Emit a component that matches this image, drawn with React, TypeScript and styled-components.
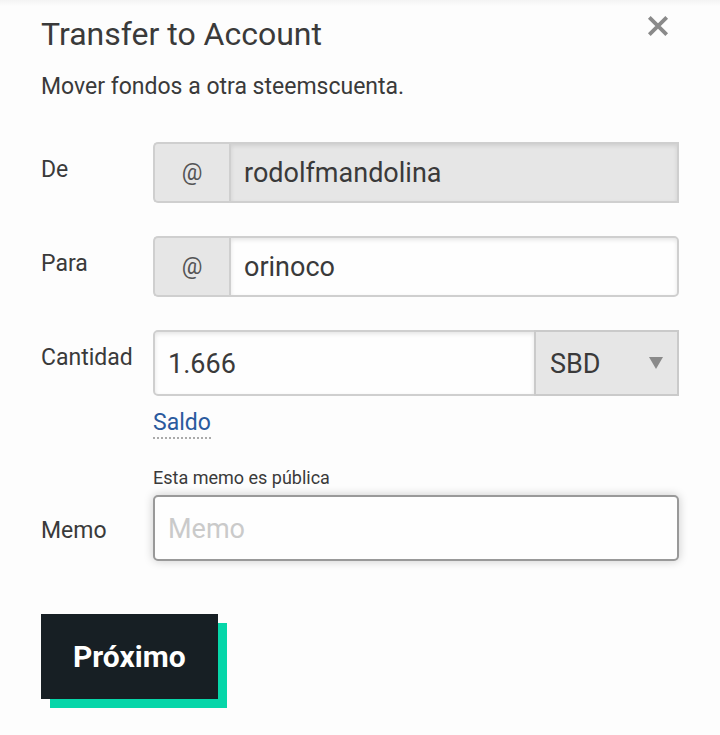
import { useState } from 'react';
import styled, { createGlobalStyle } from 'styled-components';

const App = () => {
  const [to, setTo] = useState('orinoco');
  const [amount, setAmount] = useState('1.666');
  const [memo, setMemo] = useState('');

  return (
    <>
      <GlobalStyle />
      <Dialog role="dialog" aria-labelledby="title">
        <Header>
          <Title id="title">Transfer to Account</Title>
          <CloseButton type="button" aria-label="Cerrar">
            <svg width="22" height="22" viewBox="0 0 22 22" aria-hidden="true">
              <path d="M2.3 2.3L19.7 19.7M19.7 2.3L2.3 19.7" stroke="#8a8a8a" strokeWidth="3.8" />
            </svg>
          </CloseButton>
        </Header>
        <Description>Mover fondos a otra steemscuenta.</Description>

        <Form onSubmit={(e) => e.preventDefault()}>
          <Row>
            <Label htmlFor="from">De</Label>
            <InputGroup>
              <Prefix>@</Prefix>
              <Input id="from" $attached="left" value="rodolfmandolina" disabled />
            </InputGroup>
          </Row>

          <Row>
            <Label htmlFor="to">Para</Label>
            <InputGroup>
              <Prefix>@</Prefix>
              <Input
                id="to"
                $attached="left"
                value={to}
                onChange={(e) => setTo(e.target.value)}
              />
            </InputGroup>
          </Row>

          <Row>
            <Label htmlFor="amount">Cantidad</Label>
            <div>
              <InputGroup $tall>
                <Input
                  id="amount"
                  $attached="right"
                  value={amount}
                  onChange={(e) => setAmount(e.target.value)}
                />
                <SelectWrapper>
                  <Select aria-label="Moneda" defaultValue="SBD">
                    <option>STEEM</option>
                    <option>SBD</option>
                  </Select>
                  <Arrow width="14" height="12" viewBox="0 0 14 12" aria-hidden="true">
                    <path d="M0 0H14L7 12Z" fill="#8a8a8a" />
                  </Arrow>
                </SelectWrapper>
              </InputGroup>
              <BalanceLink href="#balance">Saldo</BalanceLink>
            </div>
          </Row>

          <MemoRow>
            <Note>Esta memo es pública</Note>
            <Label htmlFor="memo">Memo</Label>
            <InputGroup $tall>
              <Input
                id="memo"
                $active
                placeholder="Memo"
                value={memo}
                onChange={(e) => setMemo(e.target.value)}
              />
            </InputGroup>
          </MemoRow>

          <SubmitButton type="submit">Próximo</SubmitButton>
        </Form>
      </Dialog>
    </>
  );
};

export default App;

const GlobalStyle = createGlobalStyle`
  *, *::before, *::after {
    box-sizing: border-box;
  }

  body {
    margin: 0;
    background: #fdfdfd;
    color: #3a3a3a;
    font-family: Roboto, sans-serif;
  }
`;

const Dialog = styled.main`
  padding: 14px 41px 28px;
  background: linear-gradient(#f4f4f4, #fdfdfd 6px);
`;

const Header = styled.header`
  display: flex;
  justify-content: space-between;
  align-items: flex-start;
`;

const Title = styled.h1`
  margin: 0;
  font-size: 32px;
  font-weight: 400;
  line-height: 40px;
`;

const CloseButton = styled.button`
  display: flex;
  margin-right: 10px;
  padding: 1px 0;
  border: 0;
  background: none;
  cursor: pointer;
`;

const Description = styled.p`
  margin: 17px 0 39px;
  font-size: 23px;
  line-height: 32px;
`;

const Form = styled.form`
  display: flex;
  flex-direction: column;
`;

const Row = styled.div`
  display: grid;
  grid-template-columns: 112px 1fr;
  margin-bottom: 34px;
`;

const MemoRow = styled(Row)`
  margin: -9px 0 53px;
`;

const Label = styled.label`
  padding-top: 12px;
  font-size: 23px;
  line-height: 32px;

  ${MemoRow} & {
    padding-top: 20px;
  }
`;

const InputGroup = styled.div<{ $tall?: boolean }>`
  display: flex;
  height: ${(props) => (props.$tall ? '66px' : '61px')};

  ${Row}:not(${MemoRow}) > & {
    margin-bottom: -1px;
  }
`;

const Prefix = styled.span`
  display: flex;
  flex: none;
  align-items: center;
  justify-content: center;
  width: 76px;
  border: 2px solid #cfcfcf;
  border-right: 0;
  border-radius: 5px 0 0 5px;
  background: #e6e6e6;
  color: #555;
  font-size: 23px;
`;

const radius = { left: '0 5px 5px 0', right: '5px 0 0 5px' };

const Input = styled.input<{ $attached?: 'left' | 'right'; $active?: boolean }>`
  flex: 1;
  min-width: 0;
  padding: 1px 13px 0;
  border: 2px solid ${(props) => (props.$active ? '#999' : '#cfcfcf')};
  border-radius: ${(props) => (props.$attached ? radius[props.$attached] : '5px')};
  background: #fefefe;
  box-shadow: ${(props) =>
    props.$active ? '0 0 10px #cacaca' : 'inset 0 2px 4px rgba(10, 10, 10, 0.1)'};
  color: #3a3a3a;
  font-family: inherit;
  font-size: 27px;
  outline: none;

  &::placeholder {
    color: #cacaca;
  }

  &:disabled {
    border-radius: 0;
    background: #e6e6e6;
  }
`;

const SelectWrapper = styled.div`
  display: grid;
  flex: none;
  align-items: center;
  width: 145px;
  margin-left: -2px;
`;

const Select = styled.select`
  grid-area: 1 / 1;
  align-self: stretch;
  padding: 1px 14px 0;
  border: 2px solid #cacaca;
  border-radius: 0;
  appearance: none;
  background: #e6e6e6;
  color: #3a3a3a;
  font-family: inherit;
  font-size: 27px;
  outline: none;
`;

const Arrow = styled.svg`
  grid-area: 1 / 1;
  justify-self: end;
  margin-right: 16px;
  pointer-events: none;
`;

const BalanceLink = styled.a`
  display: inline-block;
  margin-top: 13px;
  border-bottom: 2px dotted #aaa;
  color: #2a5a9e;
  font-size: 23px;
  line-height: 28px;
  text-decoration: none;
`;

const Note = styled.div`
  grid-column: 2;
  padding-bottom: 3px;
  font-size: 18px;
  line-height: 28px;
`;

const SubmitButton = styled.button`
  align-self: flex-start;
  padding: 0 32px;
  border: 0;
  background: #171f24;
  box-shadow: 9px 9px 0 #06d6a9;
  color: #fff;
  font-family: inherit;
  font-size: 30px;
  font-weight: 700;
  line-height: 85px;
  cursor: pointer;
`;
